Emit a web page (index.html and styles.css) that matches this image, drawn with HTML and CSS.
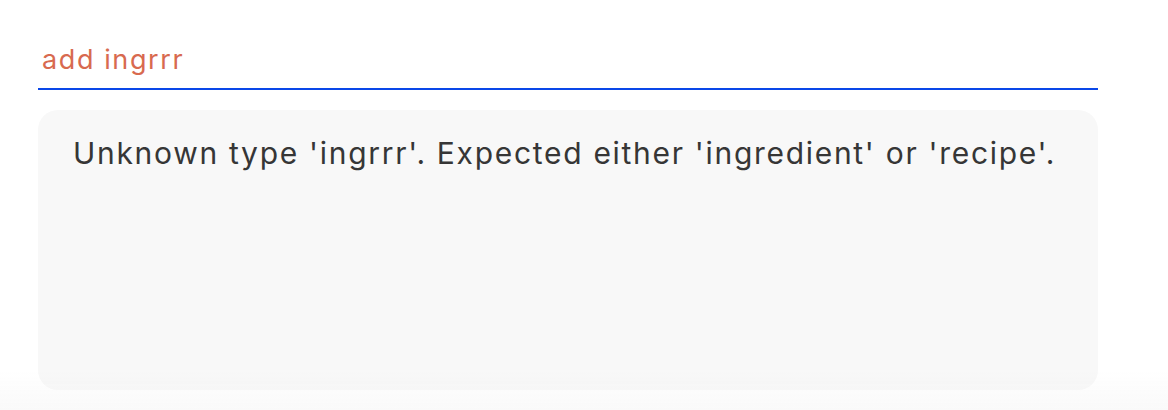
FILE: index.html
```html
<!DOCTYPE html>
<html>
<head>
<meta charset="utf-8">
<link rel="stylesheet" href="styles.css">
</head>
<body>
<main class="page">
  <div class="field">
    <input class="field-input" type="text" value="add ingrrr">
  </div>
  <section class="result">
    <p class="result-text">Unknown type 'ingrrr'. Expected either 'ingredient' or 'recipe'.</p>
  </section>
</main>
<div class="fade"></div>
</body>
</html>
```
FILE: styles.css
```css
html, body {
  margin: 0;
  padding: 0;
  background: #ffffff;
}
body {
  font-family: Inter, "Open Sans", sans-serif;
  height: 410px;
  overflow: hidden;
}
.page {
  padding: 38px 70px 0 38px;
  display: flex;
  flex-direction: column;
  gap: 20px;
}
.field {
  border-bottom: 2px solid #0a47e8;
  height: 50px;
  display: flex;
  align-items: flex-end;
}
.field-input {
  border: none;
  outline: none;
  background: transparent;
  font-family: inherit;
  font-size: 27px;
  line-height: 30px;
  height: 30px;
  letter-spacing: 1.6px;
  color: #d86a4f;
  padding: 0 0 13px 4px;
  margin: 0;
  width: 100%;
}
.result {
  background: #f8f8f8;
  border-radius: 20px;
  height: 280px;
  padding: 0 35px;
  box-sizing: border-box;
}
.result-text {
  margin: 0;
  padding-top: 23px;
  font-size: 30px;
  line-height: 40px;
  letter-spacing: 1.7px;
  color: #363636;
}
.fade {
  position: fixed;
  left: 0;
  right: 0;
  bottom: 0;
  height: 40px;
  background: linear-gradient(to bottom, rgba(240,240,240,0), rgba(240,240,240,0.35));
  pointer-events: none;
}
```
